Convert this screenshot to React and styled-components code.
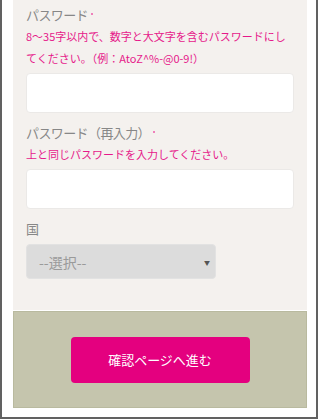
import React from 'react';
import styled, { createGlobalStyle } from 'styled-components';

const GlobalStyle = createGlobalStyle`
  html, body {
    margin: 0;
    padding: 0;
    background: #ffffff;
  }

  body {
    font-family: "Noto Sans CJK JP", "Noto Sans", sans-serif;
  }
`;

const PINK = '#e4007f';

const Field = ({ label, required, help, children }) => (
  <FieldWrapper>
    <Label>
      {label}
      {required && <RequiredMark />}
    </Label>
    {help && <Help>{help}</Help>}
    {children}
  </FieldWrapper>
);

const App = () => (
  <>
    <GlobalStyle />
    <Frame>
      <Panel>
        <Field
          label="パスワード"
          required
          help="8～35字以内で、数字と大文字を含むパスワードにしてください。（例：AtoZ^%-@0-9!）"
        >
          <TextInput type="password" />
        </Field>
        <Field
          label="パスワード（再入力）"
          required
          help="上と同じパスワードを入力してください。"
        >
          <TextInput type="password" />
        </Field>
        <Field label="国">
          <SelectWrapper>
            <Select defaultValue="">
              <option value="">--選択--</option>
            </Select>
            <Arrow>▼</Arrow>
          </SelectWrapper>
        </Field>
      </Panel>
      <Footer>
        <SubmitButton type="button">確認ページへ進む</SubmitButton>
      </Footer>
    </Frame>
  </>
);

const Frame = styled.div`
  box-sizing: border-box;
  width: 318px;
  height: 419px;
  padding: 0 9px 9px 11px;
  border: 2px solid #616161;
  border-top: none;
  display: flex;
  flex-direction: column;
`;

const Panel = styled.div`
  display: flex;
  flex-direction: column;
  gap: 10px;

  height: 310px;
  box-sizing: border-box;
  padding: 5px 13px 0 13px;
  background: #f4f1ee;
`;

const FieldWrapper = styled.div`
  display: flex;
  flex-direction: column;
`;

const Label = styled.div`
  font-size: 13px;
  line-height: 20px;
  letter-spacing: -0.6px;
  color: #878787;
`;

const RequiredMark = styled.span`
  display: inline-block;
  width: 2px;
  height: 2px;
  margin-left: 3px;
  vertical-align: 5px;
  border-radius: 1px;
  background: #ee5aa8;
`;

const Help = styled.p`
  margin: 0 0 3px;
  font-size: 11px;
  line-height: 22px;
  color: #e6198a;
`;

const TextInput = styled.input`
  box-sizing: border-box;
  width: 100%;
  height: 40px;
  margin-top: 1px;
  padding: 0 10px;
  border: 1px solid #ebe9e7;
  border-radius: 4px;
  background: #ffffff;
  outline: none;
`;

const SelectWrapper = styled.div`
  position: relative;
  width: 190px;
  margin-top: 5px;
`;

const Select = styled.select`
  box-sizing: border-box;
  width: 100%;
  height: 35px;
  padding: 0 12px;
  border: 1px solid #e2e2e2;
  border-radius: 4px;
  background: #dcdcdc;
  appearance: none;
  font-family: "Noto Sans CJK JP", sans-serif;
  font-size: 14px;
  color: #9a9a9a;
  outline: none;
`;

const Arrow = styled.span`
  position: absolute;
  right: 6px;
  top: 50%;
  transform: translateY(-50%);
  font-size: 6px;
  color: #555555;
  pointer-events: none;
`;

const Footer = styled.div`
  display: flex;
  align-items: center;
  justify-content: center;

  height: 97px;
  margin-top: 1px;
  box-sizing: border-box;
  border: 1px solid #b9ba9f;
  background: #c5c5ad;
`;

const SubmitButton = styled.button`
  width: 179px;
  height: 46px;
  border: none;
  border-radius: 4px;
  background: ${PINK};
  color: #ffffff;
  font-family: "Noto Sans CJK JP", sans-serif;
  font-size: 13px;
  cursor: pointer;
`;

export default App;
